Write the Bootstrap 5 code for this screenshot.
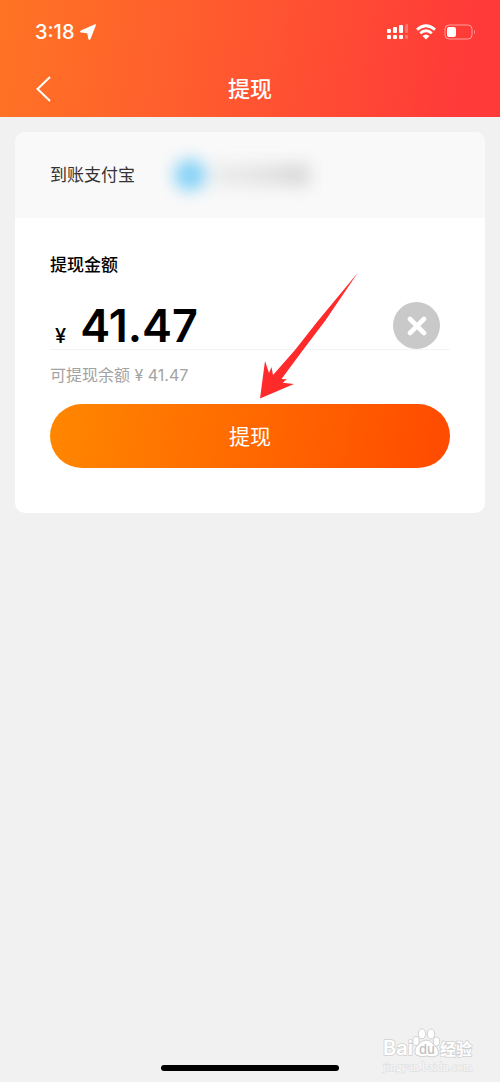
<!DOCTYPE html>
<html lang="zh-CN">
<head>
<meta charset="utf-8">
<meta name="viewport" content="width=device-width, initial-scale=1">
<title>提现</title>
<link href="https://cdn.jsdelivr.net/npm/bootstrap@5.3.0/dist/css/bootstrap.min.css" rel="stylesheet">
<style>
  body { background: #f1f1f1; font-family: Inter, "Noto Sans CJK SC", sans-serif; color: #000; }
  .app-header { background: linear-gradient(100deg, #ff7424 0%, #ff5730 48%, #ff3a39 92%); color: #fff; }
  .status-bar { height: 60px; padding: 4px 24px 0 35px; }
  .status-time { font-size: 20px; line-height: 24px; font-weight: 500; }
  .title-bar { height: 57px; padding: 0 35px; }
  .title-bar h1 { font-size: 22px; line-height: 32px; font-weight: 500; }
  .side-slot { width: 24px; }
  .pay-card { border: 0; border-radius: 10px; margin: 15px 15px 0; }
  .pay-card .card-header { background: #f9f9f9; border: 0; border-radius: 10px 10px 0 0; height: 86px; padding: 0 35px; }
  .pay-card .card-body { padding: 35px 35px 45px; }
  .account-label { font-size: 17px; line-height: 24px; color: #333; width: 120px; }
  .account-mask { width: 140px; height: 44px; filter: blur(8px); }
  .mask-dot { width: 32px; height: 32px; background: #86d2f6; }
  .mask-bar { height: 22px; background: linear-gradient(90deg, #ededed, #e2e2e2 60%, #d9d9d9 85%); }
  .amount-label { font-size: 17px; line-height: 24px; font-weight: 500; }
  .amount-row { height: 61px; margin-top: 12px; padding: 0 10px 0 5px; border-bottom: 1px solid #f3f3f3; }
  .currency { font-size: 20px; line-height: 24px; font-weight: 500; margin-top: 34px; }
  .amount-input { font-size: 45px; line-height: 48px; font-weight: 600; color: #000; min-width: 0; margin: 14px 0 0 14px; }
  .clear-btn { width: 47px; height: 47px; background: #c9c9c9; margin-top: 13px; }
  .balance { font-size: 16px; line-height: 24px; color: #a3a3a3; margin: 13px 0 17px; }
  .submit-btn { height: 64px; border: 0; color: #fff; font-size: 21px; line-height: 32px; padding: 8px 0 6px; background: linear-gradient(100deg, #ff8700 0%, #ff4a00 100%); }
  .pointer { left: 50%; top: 137px; margin-left: 5px; pointer-events: none; }
  .brand { right: 26px; bottom: 8px; pointer-events: none; }
  .home-bar { width: 178px; height: 6px; background: #000; margin-bottom: 11px; }
</style>
</head>
<body>
<div class="d-flex flex-column min-vh-100">
  <header class="app-header">
    <div class="status-bar d-flex align-items-center justify-content-between">
      <div class="d-flex align-items-center gap-1">
        <span class="status-time">3:18</span>
        <svg width="18" height="18" viewBox="0 0 18 18" aria-hidden="true"><path d="M16 1.300Q17.400 1 16.800 2.500L11.500 16Q10.500 17.800 9.500 16.200L8.200 10.200 2 9.600Q.2 9 1.800 7.600Z" fill="#fff"/></svg>
      </div>
      <div class="d-flex align-items-center gap-2">
        <svg width="22" height="16" viewBox="0 0 22 16" fill="#fff" aria-hidden="true">
          <rect x="1" y="5" width="4" height="4" rx="1"/><rect x="7" y="3" width="4" height="6" rx="1"/><rect x="13" y="1" width="4" height="8" rx="1"/><rect x="19" y="0" width="3" height="9" rx="1" opacity=".25"/>
          <rect x="1" y="11" width="4" height="4" rx="1"/><rect x="7" y="11" width="4" height="4" rx="1"/><rect x="13" y="11" width="4" height="4" rx="1"/><rect x="19" y="11" width="3" height="4" rx="1" opacity=".25"/>
        </svg>
        <svg width="20" height="16" viewBox="0 0 20 16" fill="none" stroke="#fff" stroke-width="2.800" aria-hidden="true"><path d="M1 5.600Q10-2.200 19 5.600M4.200 9.300Q10 4.300 15.800 9.300"/><path d="M6.500 12Q10 9 13.500 12L10 15.500Z" fill="#fff" stroke="none"/></svg>
        <svg width="32" height="16" viewBox="0 0 32 16" aria-hidden="true"><rect x="1" y="1" width="27" height="14" rx="4" fill="none" stroke="#fff" opacity=".5"/><rect x="3" y="3" width="9" height="10" rx="2" fill="#fff"/><path d="M30 6Q32 8 30 10Z" fill="#fff" opacity=".5"/></svg>
      </div>
    </div>
    <nav class="title-bar d-flex align-items-center justify-content-between" aria-label="页面导航">
      <a href="#" class="side-slot d-flex" aria-label="返回"><svg width="18" height="26" viewBox="0 0 18 26" fill="none" stroke="#fff" stroke-width="2"><path d="M15 1 2.500 13 15 25"/></svg></a>
      <h1 class="m-0">提现</h1>
      <span class="side-slot"></span>
    </nav>
  </header>

  <main>
    <form class="card pay-card position-relative">
      <div class="card-header d-flex align-items-center">
        <span class="account-label">到账支付宝</span>
        <div class="account-mask d-flex align-items-center gap-1" aria-hidden="true">
          <span class="mask-dot rounded-circle flex-shrink-0 ms-1"></span>
          <span class="mask-bar flex-grow-1"></span>
        </div>
      </div>
      <div class="card-body">
        <label for="amount" class="amount-label d-block">提现金额</label>
        <div class="amount-row d-flex align-items-center">
          <span class="currency">¥</span>
          <input id="amount" class="amount-input flex-grow-1 border-0 bg-transparent p-0" type="text" inputmode="decimal" value="41.47">
          <button type="button" class="clear-btn btn rounded-circle border-0 p-0 d-flex align-items-center justify-content-center flex-shrink-0" aria-label="清除">
            <svg width="20" height="20" viewBox="0 0 20 20" stroke="#fff" stroke-width="4.600" stroke-linecap="round"><path d="M3 3 17 17M17 3 3 17"/></svg>
          </button>
        </div>
        <p class="balance">可提现余额 ¥ 41.47</p>
        <button type="submit" class="submit-btn btn rounded-pill w-100">提现</button>
      </div>
      <svg class="pointer position-absolute" width="106" height="132" viewBox="0 0 106 132" aria-hidden="true"><path d="M103 3.500 62 53 40 81 18 106 16.500 98 14 104 10 92 5 129.500 39 115 27.700 113.700 31.700 110.300 26.500 110 48 81 70 52Z" fill="#ff2b2b"/></svg>
    </form>
  </main>

  <footer class="mt-auto position-relative">
    <div class="home-bar rounded-pill mx-auto"></div>
    <svg class="brand position-absolute" width="94" height="46" viewBox="0 0 94 46" role="img" aria-label="Baidu 经验" font-family="Inter, 'Noto Sans CJK SC', sans-serif">
      <g fill="#fff" stroke="#d0d0d0" stroke-width="1.500">
        <text x="3" y="27" font-size="20" font-weight="600" paint-order="stroke">Bai</text>
        <ellipse cx="36" cy="13" rx="3.200" ry="4.500" stroke-width="1"/><ellipse cx="42" cy="5.800" rx="3.700" ry="5" stroke-width="1"/><ellipse cx="51" cy="6" rx="3.700" ry="5" stroke-width="1"/><ellipse cx="56.500" cy="13.500" rx="3.200" ry="4.500" stroke-width="1"/>
        <path d="M46 12Q51 12 54 17 60 22 58 27 54 30 47 28 41 30 36 27 33 22 38 17 42 12 46 12Z" stroke-width="1"/>
        <text x="60" y="27" font-size="16" font-weight="700" paint-order="stroke">经验</text>
      </g>
      <text x="39" y="26" font-size="13" font-weight="500" fill="#c0c0c0">du</text>
      <text x="3" y="43" font-size="12" font-family="Liberation Serif, serif" fill="#fafafa" stroke="#dcdcdc" paint-order="stroke">jingyan.baidu.com</text>
    </svg>
  </footer>
</div>
<script src="https://cdn.jsdelivr.net/npm/bootstrap@5.3.0/dist/js/bootstrap.bundle.min.js"></script>
</body>
</html>
